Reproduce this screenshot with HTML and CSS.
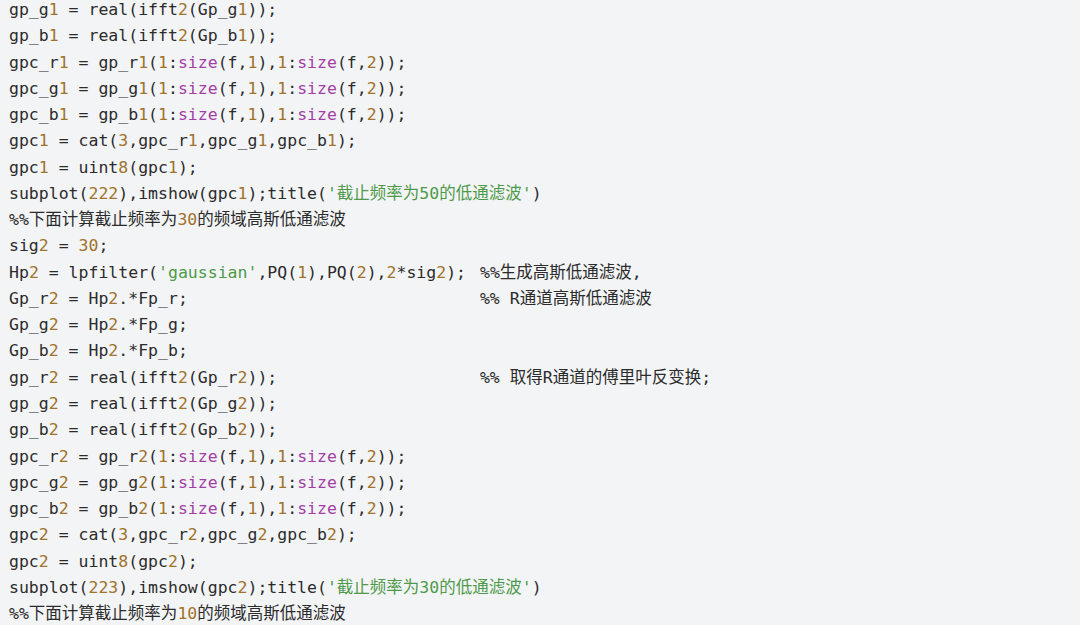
FILE: index.html
```html
<!DOCTYPE html>
<html>
<head>
<meta charset="utf-8">
<link rel="stylesheet" href="styles.css">
</head>
<body>
<pre class="code"><code>gp_g<span class="n">1</span> = real(ifft<span class="n">2</span>(Gp_g<span class="n">1</span>));
gp_b<span class="n">1</span> = real(ifft<span class="n">2</span>(Gp_b<span class="n">1</span>));
gpc_r<span class="n">1</span> = gp_r<span class="n">1</span>(<span class="n">1</span>:<span class="k">size</span>(f,<span class="n">1</span>),<span class="n">1</span>:<span class="k">size</span>(f,<span class="n">2</span>));
gpc_g<span class="n">1</span> = gp_g<span class="n">1</span>(<span class="n">1</span>:<span class="k">size</span>(f,<span class="n">1</span>),<span class="n">1</span>:<span class="k">size</span>(f,<span class="n">2</span>));
gpc_b<span class="n">1</span> = gp_b<span class="n">1</span>(<span class="n">1</span>:<span class="k">size</span>(f,<span class="n">1</span>),<span class="n">1</span>:<span class="k">size</span>(f,<span class="n">2</span>));
gpc<span class="n">1</span> = cat(<span class="n">3</span>,gpc_r<span class="n">1</span>,gpc_g<span class="n">1</span>,gpc_b<span class="n">1</span>);
gpc<span class="n">1</span> = uint<span class="n">8</span>(gpc<span class="n">1</span>);
subplot(<span class="n">222</span>),imshow(gpc<span class="n">1</span>);title(<span class="s">'截止频率为50的低通滤波'</span>)
<span class="c">%%下面计算截止频率为<span class="n">30</span>的频域高斯低通滤波</span>
sig<span class="n">2</span> = <span class="n">30</span>;
Hp<span class="n">2</span> = lpfilter(<span class="s">'gaussian'</span>,PQ(<span class="n">1</span>),PQ(<span class="n">2</span>),<span class="n">2</span>*sig<span class="n">2</span>); <span class="c tc">%%生成高斯低通滤波,</span>
Gp_r<span class="n">2</span> = Hp<span class="n">2</span>.*Fp_r;                             <span class="c tc">%% R通道高斯低通滤波</span>
Gp_g<span class="n">2</span> = Hp<span class="n">2</span>.*Fp_g;
Gp_b<span class="n">2</span> = Hp<span class="n">2</span>.*Fp_b;
gp_r<span class="n">2</span> = real(ifft<span class="n">2</span>(Gp_r<span class="n">2</span>));                    <span class="c tc">%% 取得R通道的傅里叶反变换;</span>
gp_g<span class="n">2</span> = real(ifft<span class="n">2</span>(Gp_g<span class="n">2</span>));
gp_b<span class="n">2</span> = real(ifft<span class="n">2</span>(Gp_b<span class="n">2</span>));
gpc_r<span class="n">2</span> = gp_r<span class="n">2</span>(<span class="n">1</span>:<span class="k">size</span>(f,<span class="n">1</span>),<span class="n">1</span>:<span class="k">size</span>(f,<span class="n">2</span>));
gpc_g<span class="n">2</span> = gp_g<span class="n">2</span>(<span class="n">1</span>:<span class="k">size</span>(f,<span class="n">1</span>),<span class="n">1</span>:<span class="k">size</span>(f,<span class="n">2</span>));
gpc_b<span class="n">2</span> = gp_b<span class="n">2</span>(<span class="n">1</span>:<span class="k">size</span>(f,<span class="n">1</span>),<span class="n">1</span>:<span class="k">size</span>(f,<span class="n">2</span>));
gpc<span class="n">2</span> = cat(<span class="n">3</span>,gpc_r<span class="n">2</span>,gpc_g<span class="n">2</span>,gpc_b<span class="n">2</span>);
gpc<span class="n">2</span> = uint<span class="n">8</span>(gpc<span class="n">2</span>);
subplot(<span class="n">223</span>),imshow(gpc<span class="n">2</span>);title(<span class="s">'截止频率为30的低通滤波'</span>)
<span class="c">%%下面计算截止频率为<span class="n">10</span>的频域高斯低通滤波</span></code></pre>
</body>
</html>
```

FILE: styles.css
```css
html, body {
  margin: 0;
  padding: 0;
  background: #f3f4f6;
  width: 1080px;
  height: 625px;
  overflow: hidden;
}
.code {
  margin: -3px 0 0 0;
  padding: 0 0 0 9px;
  font-family: "DejaVu Sans Mono", "Noto Sans CJK SC", monospace;
  font-size: 16.5px;
  line-height: 26.26px;
  color: #2b2b2b;
  white-space: pre;
}
.code code {
  font-family: inherit;
}
.n { color: #a0722a; }
.k { color: #a23fa6; }
.s { color: #4f9a4a; }
.c { color: #2b2b2b; }
.tc { margin-left: 4px; }
```
